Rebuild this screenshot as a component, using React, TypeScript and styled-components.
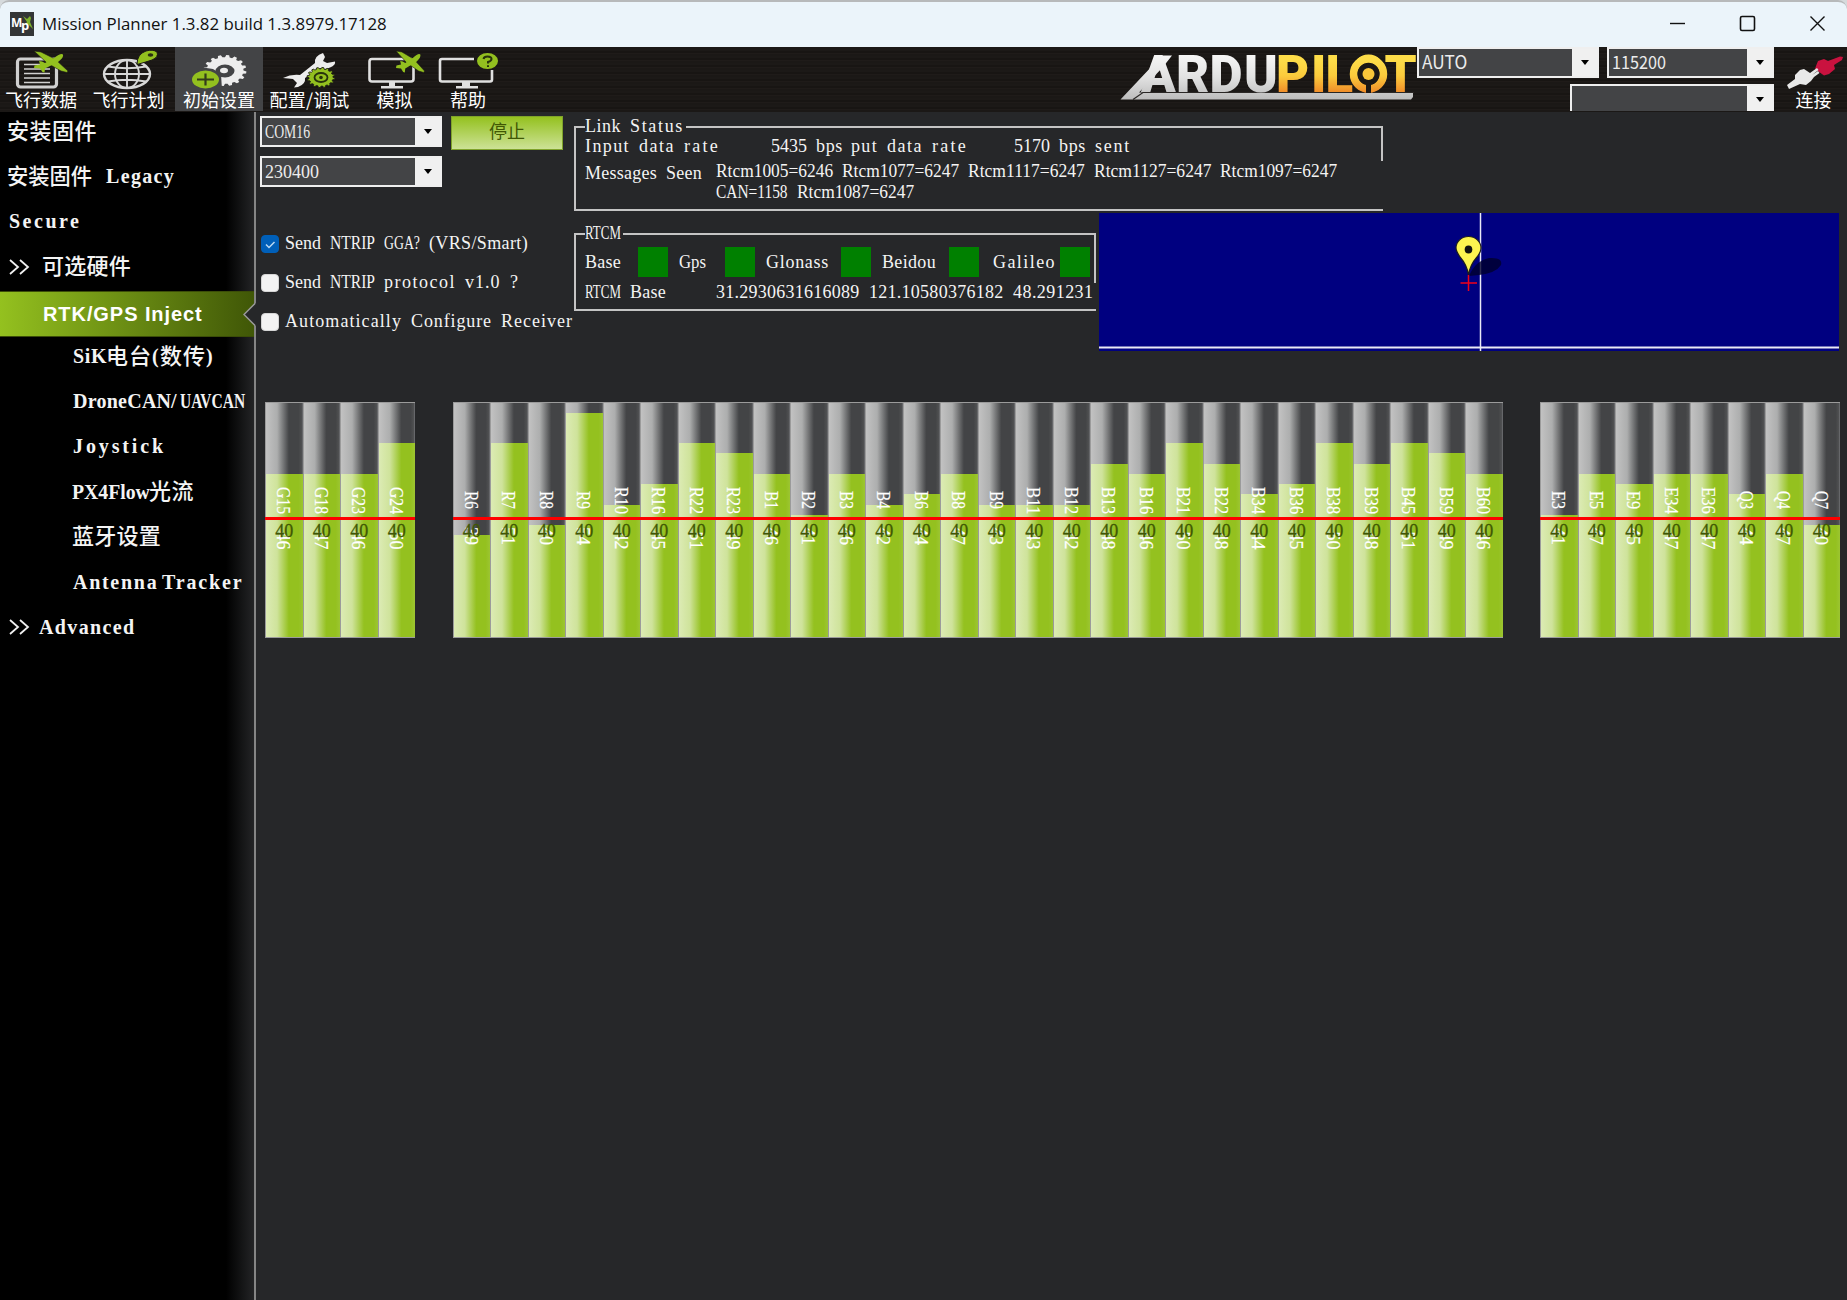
import React, { useLayoutEffect, useRef, useState } from "react";
import styled, { createGlobalStyle, css } from "styled-components";

const SERIF = `"Liberation Serif", "Noto Sans CJK SC", serif`;
const SANS = `"Liberation Sans", "Noto Sans CJK SC", sans-serif`;

const GlobalStyle = createGlobalStyle`
  * { box-sizing: border-box; }
  body { margin: 0; background: #262729; overflow: hidden; }
`;

/* ---------- text fitted to a fixed advance ---------- */

const FitBox = styled.span<{ $w: number }>`
  display: inline-block;
  width: ${(p) => p.$w}px;
  white-space: pre;
  flex: none;
`;

const FitInner = styled.span`
  display: inline-block;
  transform-origin: 0 50%;
`;

function Fit({ w, children }: { w: number; children: string }) {
  const ref = useRef<HTMLSpanElement>(null);
  const [fit, setFit] = useState({ spacing: 0, scale: 1 });
  useLayoutEffect(() => {
    const el = ref.current;
    if (!el) return;
    const n = Array.from(children).length;
    const natural = el.offsetWidth - fit.spacing * n;
    setFit(natural > w ? { spacing: 0, scale: w / natural } : { spacing: (w - natural) / Math.max(1, n), scale: 1 });
    // eslint-disable-next-line react-hooks/exhaustive-deps
  }, [w, children]);
  return (
    <FitBox $w={w}>
      <FitInner
        ref={ref}
        style={{ letterSpacing: fit.spacing, transform: fit.scale < 1 ? `scaleX(${fit.scale})` : undefined }}
      >
        {children}
      </FitInner>
    </FitBox>
  );
}

const MonoLine = styled.span<{ $ml?: number }>`
  display: inline-flex;
  white-space: pre;
  flex: none;
  margin-left: ${(p) => p.$ml ?? 0}px;
`;

const Space = styled.span<{ $w: number }>`
  width: ${(p) => p.$w}px;
  flex: none;
`;

function Mono({ text, ml, cell = 9 }: { text: string; ml?: number; cell?: number }) {
  return (
    <MonoLine $ml={ml}>
      {text
        .split(/( )/)
        .filter((t) => t !== "")
        .map((t, i) =>
          t === " " ? (
            <Space key={i} $w={cell}> </Space>
          ) : (
            <Fit key={i} w={t.length * cell}>{t}</Fit>
          )
        )}
    </MonoLine>
  );
}

/* ---------- window frame ---------- */

const Window = styled.div`
  width: 1847px;
  height: 1300px;
  display: flex;
  flex-direction: column;
  overflow: hidden;
  background: #262729;
  color: #f4f4f4;
  font: 18px/20px ${SERIF};
`;

const TitleBar = styled.header`
  height: 47px;
  flex: none;
  border-top: 2px solid #b7b9ba;
  border-radius: 9px 9px 0 0;
  background: #ebf4fa;
  box-shadow: 0 -10px 0 10px #d6dadc;
  display: flex;
  align-items: center;
  padding: 0 21px 2px 10px;
  color: #111;
  font: 17px/24px "Open Sans", "Noto Sans", sans-serif;
  z-index: 1;
  clip-path: inset(0);
`;

const AppIcon = styled.svg`
  width: 24px;
  height: 24px;
  margin-right: 8px;
`;

const WindowButtons = styled.div`
  margin-left: auto;
  display: flex;
  gap: 53px;
  svg {
    width: 17px;
    height: 17px;
    fill: none;
    stroke: #111;
    stroke-width: 1.4;
  }
`;

/* ---------- toolbar ---------- */

const Toolbar = styled.nav`
  height: 65px;
  flex: none;
  display: flex;
  background: repeating-linear-gradient(0deg, #1b1816 0 2px, #1f1b19 2px 3px, #181513 3px 5px, #1c1917 5px 7px);
`;

const Tool = styled.div<{ $w: number; $active?: boolean }>`
  width: ${(p) => p.$w}px;
  height: 64px;
  flex: none;
  display: flex;
  flex-direction: column;
  align-items: center;
  background: ${(p) => (p.$active ? "#434446" : "transparent")};
  font: 18px/20px "Noto Sans CJK SC", sans-serif;
  color: #fff;
  svg {
    width: 80px;
    height: 42px;
    flex: none;
    overflow: visible;
  }
`;

const Logo = styled.svg`
  width: 296px;
  height: 64px;
  margin-left: auto;
  flex: none;
  overflow: visible;
`;

const Connection = styled.div`
  width: 357px;
  margin-left: 2px;
  flex: none;
  display: flex;
  flex-wrap: wrap;
  align-content: flex-start;
  justify-content: flex-end;
  gap: 6px 8px;
  height: 64px;
  overflow: hidden;
`;

const ComboBox = styled.div<{ $w: number; $h?: number; $sans?: boolean }>`
  width: ${(p) => p.$w}px;
  height: ${(p) => p.$h ?? 31}px;
  flex: none;
  display: flex;
  align-items: center;
  justify-content: space-between;
  border: 2px solid #efefef;
  background: #434446;
  padding-left: 3px;
  color: #ececec;
  font: 18px/22px ${(p) => (p.$sans ? `"Noto Sans CJK SC", sans-serif` : SERIF)};
  > span:first-child {
    margin-bottom: ${(p) => (p.$sans ? 4 : 0)}px;
  }
`;

const ComboArrow = styled.div`
  width: 25px;
  align-self: stretch;
  background: #f0f0f0;
  display: flex;
  align-items: center;
  justify-content: center;
  &::after {
    content: "";
    border: 4px solid transparent;
    border-top: 5px solid #000;
    border-bottom: 0;
    margin-left: 1px;
  }
`;

const Combo = (p: { text: string; w: number; tw?: number; h?: number; sans?: boolean }) => (
  <ComboBox $w={p.w} $h={p.h} $sans={p.sans}>
    {p.text ? <Fit w={p.tw ?? p.text.length * 9}>{p.text}</Fit> : <span />}
    <ComboArrow />
  </ComboBox>
);

const Plane = ({ x, y, s = 1 }: { x: number; y: number; s?: number }) => (
  <g transform={`translate(${x} ${y}) scale(${s} 1)`} fill="#93c01f" stroke="#1b1816" strokeWidth="0.6">
    <path d="M0 0L7 1L21 8L34 20L33 21.500L27 20L13 12Z" />
    <path d="M20 7Q27 1.500 29 3.500Q30 6.500 24 11L11 17.500L10.500 21.500L8.500 21L6 17.500L0 17L0.500 14.500L6 13.500L5 10L8 10.500L11 12Z" stroke="none" />
  </g>
);

const gearPath = (cx: number, cy: number, r: number, teeth: number) => {
  const out: string[] = [];
  for (let i = 0; i < teeth; i++) {
    const a = (i / teeth) * Math.PI * 2;
    const st = (Math.PI * 2) / teeth;
    const pts: [number, number][] = [
      [r * 0.86, a],
      [r, a + st * 0.15],
      [r, a + st * 0.5],
      [r * 0.86, a + st * 0.65],
    ];
    pts.forEach(([rr, an]) => out.push(`${(cx + rr * Math.cos(an)).toFixed(2)} ${(cy + rr * Math.sin(an)).toFixed(2)}`));
  }
  return out;
};

const FlightDataIcon = () => (
  <svg viewBox="1 47 80 42">
    <rect x="17.500" y="59" width="39" height="28" rx="3" fill="none" stroke="#d0d0d0" strokeWidth="3.200" />
    <path d="M24 64.500H50M24 69H50M24 73.500H50M24 78H50M24 82.500H50" stroke="#d0d0d0" strokeWidth="1.700" />
    <Plane x={34} y={51} />
  </svg>
);

const FlightPlanIcon = () => (
  <svg viewBox="90 47 80 42">
    <g fill="none" stroke="#d8d8d8" strokeWidth="1.900">
      <ellipse cx="128" cy="74" rx="23" ry="14" strokeWidth="2.400" />
      <ellipse cx="128" cy="74" rx="12" ry="14" />
      <path d="M128 60V88M105 74H151M109 66.500Q128 70 147 66.500M109 81.500Q128 78 147 81.500" />
    </g>
    <path d="M138 64.500Q138 54 147 51Q154 49 158 52Q160 57 153 60Q147 62 138 64.500Z" fill="#93c01f" stroke="#1b1816" strokeWidth="1" />
    <ellipse cx="151.500" cy="55" rx="2.800" ry="1.800" fill="#2a2f14" />
  </svg>
);

const SetupIcon = () => (
  <svg viewBox="179 47 80 42">
    <polygon points={gearPath(0, 0, 21.5, 16).join(" ")} transform="translate(225 70.500) scale(1 0.72)" fill="#ededed" />
    <ellipse cx="225" cy="71" rx="9.500" ry="6.500" fill="#434446" />
    <ellipse cx="224" cy="70.500" rx="4" ry="2.800" fill="#ededed" />
    <path d="M200 67L213 69L221 74L222 90L200 89Z" fill="#434446" />
    <ellipse cx="205.500" cy="79.500" rx="13.500" ry="9" fill="#93c01f" />
    <path d="M197 79.500H214M205.500 73.500V85.500" stroke="#333b1c" strokeWidth="2.200" />
  </svg>
);

const ConfigIcon = () => (
  <svg viewBox="270 47 80 42">
    <path
      d="M283 78Q291 74 300 75L315 63Q314 56 323 53L325 57L323 61L327 63L335 61.500Q336 65 330 67.500Q325 70 320 68L305 78Q306 84 298 87L294 87.500L297 83L293 79Z"
      fill="#ededed"
    />
    <polygon points={gearPath(0, 0, 14, 16).join(" ")} transform="translate(321 77.500) scale(1 0.72)" fill="#93c01f" stroke="#1b1816" strokeWidth="1" />
    <ellipse cx="321" cy="77.500" rx="6.500" ry="4.500" fill="none" stroke="#27320c" strokeWidth="1.800" />
    <circle cx="321" cy="77.500" r="1.800" fill="#27320c" />
  </svg>
);

const SimIcon = () => (
  <svg viewBox="355 47 80 42">
    <rect x="369.500" y="59" width="44" height="22.500" rx="2.500" fill="none" stroke="#e0e0e0" strokeWidth="2.600" />
    <path d="M389 82h6v4h8v2.500h-22V86h8Z" fill="#e0e0e0" />
    <Plane x={396} y={51} s={0.84} />
  </svg>
);

const HelpIcon = () => (
  <svg viewBox="429 47 80 42">
    <path d="M475 59H443Q441 59 441 61V79.500Q441 81.500 443 81.500H491Q493 81.500 493 79.500V70" fill="none" stroke="#e0e0e0" strokeWidth="2.600" />
    <path d="M463 82h8v4h8v2.500h-22V86h6Z" fill="#e0e0e0" />
    <ellipse cx="488.500" cy="61" rx="10.500" ry="8" fill="#93c01f" />
    <path d="M484.500 59Q485 56.500 488.500 56.500Q492.500 56.500 492.500 59Q492.500 61 489 62V63.500M489 65.200V67" fill="none" stroke="#27320c" strokeWidth="2" />
  </svg>
);

const ConnectIcon = () => (
  <svg viewBox="1771 47 80 42">
    <path d="M1843 57L1842 60L1834 65L1835 69L1829 74L1824 75.500L1815 69L1816 66L1818 61L1824 59L1828 61L1840 56.500Z" fill="#c9123f" />
    <path d="M1787 85L1795 79L1795 75L1800 70L1804 69L1810 73L1817 68L1818.500 70L1812 75L1818 71L1819.500 73L1814 77L1811 81L1806 85L1800 84L1789 89Z" fill="#e8e8e8" />
  </svg>
);

const ArduPilotLogo = () => (
  <Logo viewBox="1119 47 296 64">
    <defs>
      <linearGradient id="silver" gradientUnits="userSpaceOnUse" x1="0" y1="55" x2="0" y2="99">
        <stop offset="0" stopColor="#f6f6f6" />
        <stop offset="0.500" stopColor="#e2e2e2" />
        <stop offset="1" stopColor="#bdbdbd" />
      </linearGradient>
      <linearGradient id="gold" gradientUnits="userSpaceOnUse" x1="0" y1="55" x2="0" y2="93">
        <stop offset="0.150" stopColor="#fddc48" />
        <stop offset="0.550" stopColor="#fbcb3c" />
        <stop offset="1" stopColor="#f08a28" />
      </linearGradient>
    </defs>
    <path d="M1120.500 99.500L1162 55.500H1172L1163 67L1139 92.500H1140L1413 93V97L1411 99.500Z" fill="url(#silver)" />
    <path d="M1133 99.500L1143 92.500H1414" stroke="#2a2725" strokeWidth="1.200" fill="none" />
    <g fontFamily="Roboto, sans-serif" fontWeight="900" fontSize="51">
      <text x="1141 1176 1209.500 1244" y="91.800" fill="url(#silver)">ARDU</text>
      <text x="1276 1311 1325.500 1351 1384.500" y="91.800" fill="url(#gold)">PILOT</text>
    </g>
    <circle cx="1368.500" cy="74" r="11.500" fill="#1b1816" />
    <circle cx="1368.500" cy="74" r="15" fill="none" stroke="url(#gold)" strokeWidth="7.500" />
    <path d="M1366 80H1371V93H1366Z" fill="#1b1816" />
    <circle cx="1368.500" cy="74" r="6" fill="#f9c63a" />
  </Logo>
);

/* ---------- side menu ---------- */

const Body = styled.div`
  flex: 1;
  display: flex;
  min-height: 0;
`;

const Sidebar = styled.aside`
  width: 256px;
  flex: none;
  border-right: 2px solid #858585;
  background: linear-gradient(90deg, #000 226px, #262729 256px);
`;

const SideItem = styled.div<{ $x: number; $gap?: number }>`
  height: 45.15px;
  margin-top: ${(p) => p.$gap ?? 0}px;
  padding-left: ${(p) => p.$x}px;
  display: flex;
  align-items: center;
  font: bold 20px/24px ${SERIF};
  color: #f4f4f4;
  white-space: pre;
`;

const Cjk = styled.span<{ $mr?: number }>`
  font: 500 22px/24px "Noto Sans CJK SC", sans-serif;
  margin: 0 ${(p) => p.$mr ?? 0}px 5px -1px;
`;

const Chevrons = styled.svg<{ $mr: number }>`
  width: 21px;
  height: 16px;
  margin-right: ${(p) => p.$mr}px;
  fill: none;
  stroke: #f0f0f0;
  stroke-width: 1.8;
`;

const Expand = ({ mr }: { mr: number }) => (
  <Chevrons $mr={mr} viewBox="0 0 21 16">
    <path d="M1 1L9 8L1 15M11 1L19 8L11 15" />
  </Chevrons>
);

const SideSelected = styled.div`
  height: 45.500px;
  margin-top: 1.900px;
  padding-left: 43px;
  position: relative;
  display: flex;
  align-items: center;
  border: solid #3b4d08;
  border-width: 1px 0;
  background: linear-gradient(90deg, #94c11f, #405707);
  font: bold 20px/24px ${SANS};
  color: #fff;
  svg {
    position: absolute;
    right: -2px;
    top: 11px;
    width: 13px;
    height: 23px;
  }
`;

/* ---------- injector page ---------- */

const Page = styled.main`
  flex: 1;
  min-width: 0;
  display: flex;
  flex-direction: column;
`;

const Top = styled.section`
  height: 289.500px;
  flex: none;
  display: flex;
  padding-left: 4px;
`;

const Controls = styled.div`
  width: 314px;
  flex: none;
  padding-top: 4px;
  display: flex;
  flex-direction: column;
`;

const Ports = styled.div`
  display: grid;
  grid-template-columns: 182px 112px;
  column-gap: 9px;
  row-gap: 6px;
  margin-bottom: 36px;
`;

const StopButton = styled.button`
  height: 34px;
  padding: 0 0 6px;
  border: 1px solid #7fa32a;
  background: linear-gradient(#94c11f, #cde296);
  color: #405704;
  font: 18px/22px "Noto Sans CJK SC", sans-serif;
`;

const CheckRow = styled.label`
  height: 39px;
  display: flex;
  align-items: center;
`;

const CheckMark = styled.span<{ $on?: boolean }>`
  width: 18px;
  height: 18px;
  margin: 2px 6px 0 1px;
  border-radius: 4px;
  background: #f3f3f3;
  border: 1px solid #d5d5d5;
  ${(p) =>
    p.$on &&
    css`
      background: #005fb8;
      border-color: #005fb8;
    `}
  svg {
    display: block;
    width: 16px;
    height: 16px;
  }
`;

const Status = styled.div`
  flex: none;
  width: 1266px;
  padding-top: 14px;
  display: flex;
  flex-direction: column;
`;

const Group = styled.section<{ $w: number; $h: number; $side: number }>`
  width: ${(p) => p.$w}px;
  height: ${(p) => p.$h}px;
  flex: none;
  position: relative;
  border: 2px solid #c4c4c4;
  border-right: 0;
  padding-left: 9px;
  &::after {
    content: "";
    position: absolute;
    right: 0;
    top: 0;
    width: 2px;
    height: ${(p) => p.$side}px;
    background: #c4c4c4;
  }
`;

const Legend = styled.h2`
  width: max-content;
  height: 18px;
  margin: -11px 0 0;
  padding: 0 2px 0 0;
  background: #262729;
  font: 18px/18px ${SERIF};
`;

const Line = styled.div<{ $mt?: number; $h?: number }>`
  display: flex;
  align-items: center;
  height: ${(p) => p.$h ?? 20}px;
  margin-top: ${(p) => p.$mt ?? 0}px;
`;

const Messages = styled.div`
  display: flex;
  flex-direction: column;
  gap: 1px;
  margin-left: 14px;
  margin-top: 17px;
`;

const Lower = styled.div`
  display: flex;
  align-items: flex-start;
  margin-top: 2px;
`;

const Lamp = styled.span<{ $l: number; $r: number }>`
  width: 30px;
  height: 30px;
  flex: none;
  margin: 0 ${(p) => p.$r}px 0 ${(p) => p.$l}px;
  background: #008000;
`;

const Map = styled.div`
  width: 740px;
  height: 138px;
  margin-left: 3px;
  background: #000080;
  svg {
    display: block;
  }
`;

const Shifted = styled.div`
  margin-top: 20px;
`;

/* ---------- satellite bars ---------- */

const Chart = styled.section`
  display: flex;
  gap: 37.500px;
  padding-left: 9.300px;
`;

const BarGroup = styled.div`
  position: relative;
  display: flex;
  height: 236px;
`;

const Threshold = styled.div`
  position: absolute;
  left: 0;
  right: 0;
  top: 115px;
  height: 3px;
  background: #f00;
`;

const Bar = styled.div`
  width: 37.500px;
  height: 236px;
  position: relative;
  display: flex;
  align-items: flex-end;
  border: solid #9b9b9b;
  border-width: 1px 0 1px 1px;
  background: linear-gradient(90deg, #c2c2c2, #adaeae 30%, #434446 62%, #434446 88%, #555657);
  box-shadow: inset -1px 0 0 #66676a;
`;

const Level = styled.div`
  width: 100%;
  background: linear-gradient(90deg, #dcebb4, #cfe39b 30%, #94c11f 62%, #94c11f 88%, #9cc532);
`;

const SatText = styled.div`
  position: absolute;
  left: 17px;
  top: 115px;
  width: 0;
  height: 0;
  display: flex;
  align-items: center;
  justify-content: center;
  transform: rotate(90deg);
  font: 18px/18px ${SERIF};
  color: #fff;
  -webkit-text-stroke: 0.2px #fff;
`;

const Limit = styled.div`
  position: absolute;
  left: 9px;
  top: 118px;
  font: 18px/20px ${SERIF};
  color: #405704;
  -webkit-text-stroke: 0.3px #405704;
`;

const STEPS: Record<number, number> = {
  39: 102, 40: 112, 41: 122, 42: 132, 43: 132, 44: 143, 45: 153, 46: 163,
  47: 163, 48: 173, 49: 184, 50: 194, 51: 194, 54: 224,
};

type Sat = [string, number];
const GROUPS: Sat[][] = [
  [["G15", 46], ["G18", 47], ["G23", 46], ["G24", 50]],
  [
    ["R6", 39], ["R7", 51], ["R8", 40], ["R9", 54], ["R10", 42], ["R16", 45], ["R22", 51],
    ["R23", 49], ["B1", 46], ["B2", 41], ["B3", 46], ["B4", 42], ["B6", 44], ["B8", 47],
    ["B9", 43], ["B11", 43], ["B12", 42], ["B13", 48], ["B16", 46], ["B21", 50], ["B22", 48],
    ["B34", 44], ["B36", 45], ["B38", 50], ["B39", 48], ["B45", 51], ["B59", 49], ["B60", 46],
  ],
  [["E3", 41], ["E5", 47], ["E9", 45], ["E34", 47], ["E36", 47], ["Q3", 44], ["Q4", 47], ["Q7", 40]],
];

export default function App() {
  return (
    <Window>
      <GlobalStyle />
      <TitleBar>
        <AppIcon viewBox="0 0 24 24">
          <rect width="24" height="24" fill="#333536" />
          <path d="M13 4L17 7L20 4L21 6L20 10L23 17L18 12L15 13L17 10Z" fill="#7fb32a" />
          <text x="1" y="15" fontFamily="Open Sans, sans-serif" fontWeight="700" fontSize="12" fill="#fff">M</text>
          <text x="11" y="18" fontFamily="Open Sans, sans-serif" fontWeight="700" fontSize="13" fill="#fff">p</text>
        </AppIcon>
        <Fit w={345}>Mission Planner 1.3.82 build 1.3.8979.17128</Fit>
        <WindowButtons>
          <svg viewBox="0 0 17 17"><path d="M1 8.500H16" /></svg>
          <svg viewBox="0 0 17 17"><rect x="1.500" y="1.500" width="14" height="14" rx="1.500" strokeWidth="1.600" /></svg>
          <svg viewBox="0 0 17 17"><path d="M1.500 1.500L15.500 15.500M15.500 1.500L1.500 15.500" /></svg>
        </WindowButtons>
      </TitleBar>

      <Toolbar>
        <Tool $w={82}><FlightDataIcon /><Fit w={72}>飞行数据</Fit></Tool>
        <Tool $w={93}><FlightPlanIcon /><Fit w={72}>飞行计划</Fit></Tool>
        <Tool $w={88} $active><SetupIcon /><Fit w={72}>初始设置</Fit></Tool>
        <Tool $w={93}><ConfigIcon /><Fit w={80}>配置/调试</Fit></Tool>
        <Tool $w={77}><SimIcon /><Fit w={36}>模拟</Fit></Tool>
        <Tool $w={70}><HelpIcon /><Fit w={36}>帮助</Fit></Tool>
        <ArduPilotLogo />
        <Connection>
          <Combo text="AUTO" w={182} tw={45} sans />
          <Combo text="115200" w={167} tw={54} sans />
          <Combo text="" w={204} />
        </Connection>
        <Tool $w={73}><ConnectIcon /><MonoLine $ml={6}><Fit w={36}>连接</Fit></MonoLine></Tool>
      </Toolbar>

      <Body>
        <Sidebar>
          <SideItem $x={8} $gap={-3.4}><Cjk><Fit w={90}>安装固件</Fit></Cjk></SideItem>
          <SideItem $x={8}><Cjk $mr={14}><Fit w={85}>安装固件</Fit></Cjk><Fit w={69}>Legacy</Fit></SideItem>
          <SideItem $x={9}><Fit w={72}>Secure</Fit></SideItem>
          <SideItem $x={9}><Expand mr={13} /><Cjk><Fit w={89}>可选硬件</Fit></Cjk></SideItem>
          <SideSelected>
            <Fit w={160}>RTK/GPS Inject</Fit>
            <svg viewBox="0 0 13 23">
              <path d="M13 0L12 1L1 11.500L12 22L13 23Z" fill="#262729" />
              <path d="M12 0.500L1 11.500L12 22.500" fill="none" stroke="#999" strokeWidth="1.500" />
            </svg>
          </SideSelected>
          <SideItem $x={73} $gap={-3}>
            <Fit w={34}>SiK</Fit><Cjk><Fit w={46}>电台</Fit></Cjk><Fit w={9}>(</Fit><Cjk><Fit w={46}>数传</Fit></Cjk><Fit w={10}>)</Fit>
          </SideItem>
          <SideItem $x={73}><Fit w={98}>DroneCAN</Fit><Fit w={9}>/</Fit><Fit w={65}>UAVCAN</Fit></SideItem>
          <SideItem $x={73}><Fit w={93}>Joystick</Fit></SideItem>
          <SideItem $x={72}><Fit w={78}>PX4Flow</Fit><Cjk><Fit w={45}>光流</Fit></Cjk></SideItem>
          <SideItem $x={73}><Cjk><Fit w={89}>蓝牙设置</Fit></Cjk></SideItem>
          <SideItem $x={73}><Fit w={85}>Antenna</Fit><Space $w={4}> </Space><Fit w={82}>Tracker</Fit></SideItem>
          <SideItem $x={9}><Expand mr={9} /><Fit w={97}>Advanced</Fit></SideItem>
        </Sidebar>

        <Page>
          <Top>
            <Controls>
              <Ports>
                <Combo text="COM16" w={182} />
                <StopButton>停止</StopButton>
                <Combo text="230400" w={182} />
              </Ports>
              <CheckRow>
                <CheckMark $on>
                  <svg viewBox="0 0 16 16"><path d="M4 8.500L7 11.500L12.500 6" fill="none" stroke="#b9d8f2" strokeWidth="1.500" /></svg>
                </CheckMark>
                <Mono text="Send NTRIP GGA? (VRS/Smart)" />
              </CheckRow>
              <CheckRow><CheckMark /><Mono text="Send NTRIP protocol v1.0 ?" /></CheckRow>
              <CheckRow><CheckMark /><Mono text="Automatically Configure Receiver" /></CheckRow>
            </Controls>

            <Status>
              <Group $w={809} $h={85} $side={33}>
                <Legend><Mono text="Link Status" /></Legend>
                <Line $mt={1}>
                  <Mono text="Input data rate" />
                  <Mono text="5435 bps" ml={51} />
                  <Mono text="put data rate" ml={8} />
                  <Mono text="5170 bps sent" ml={46} />
                </Line>
                <Line $mt={7}>
                  <Mono text="Messages Seen" />
                  <Messages>
                    <Mono text="Rtcm1005=6246 Rtcm1077=6247 Rtcm1117=6247 Rtcm1127=6247 Rtcm1097=6247" />
                    <Mono text="CAN=1158 Rtcm1087=6247" />
                  </Messages>
                </Line>
              </Group>
              <Lower>
                <Shifted>
                  <Group $w={522} $h={78} $side={48}>
                    <Legend><Mono text="RTCM" /></Legend>
                    <Line $mt={5} $h={30}>
                      <Mono text="Base" /><Lamp $l={17} $r={11} />
                      <Mono text="Gps" /><Lamp $l={19} $r={11} />
                      <Mono text="Glonass" /><Lamp $l={12} $r={11} />
                      <Mono text="Beidou" /><Lamp $l={13} $r={14} />
                      <Mono text="Galileo" /><Lamp $l={4} $r={0} />
                    </Line>
                    <Line $mt={5}>
                      <Mono text="RTCM Base" />
                      <Mono text="31.2930631616089 121.10580376182 48.291231" ml={50} />
                    </Line>
                  </Group>
                </Shifted>
                <Map>
                  <svg width="740" height="138" viewBox="0 0 740 138">
                    <path d="M0 134.500H740" stroke="#e9e9f6" strokeWidth="2" />
                    <path d="M381.500 0V138" stroke="#e9e9f6" strokeWidth="1.500" />
                    <path d="M370 63Q376 48 390 45Q404 44 402 52Q397 60 380 62Z" fill="#00002c" opacity="0.800" />
                    <path d="M369.500 62Q368 52 361 44Q357 38 357 35A12.500 11.500 0 0 1 382 35Q382 39 378 44Q371 52 369.500 62Z" fill="#fcf350" stroke="#1c1c20" strokeWidth="1.200" />
                    <ellipse cx="369.500" cy="36.500" rx="3.800" ry="4" fill="#111" />
                    <path d="M361.500 70H378M369.500 62V78" stroke="#f00018" strokeWidth="1.500" />
                  </svg>
                </Map>
              </Lower>
            </Status>
          </Top>

          <Chart>
            {GROUPS.map((group, g) => (
              <BarGroup key={g}>
                {group.map(([name, value]) => (
                  <Bar key={name}>
                    <Level style={{ height: STEPS[value] }} />
                    <SatText><Mono text={`${name}  ${value}`} /></SatText>
                    <Limit>40</Limit>
                  </Bar>
                ))}
                <Threshold />
              </BarGroup>
            ))}
          </Chart>
        </Page>
      </Body>
    </Window>
  );
}
